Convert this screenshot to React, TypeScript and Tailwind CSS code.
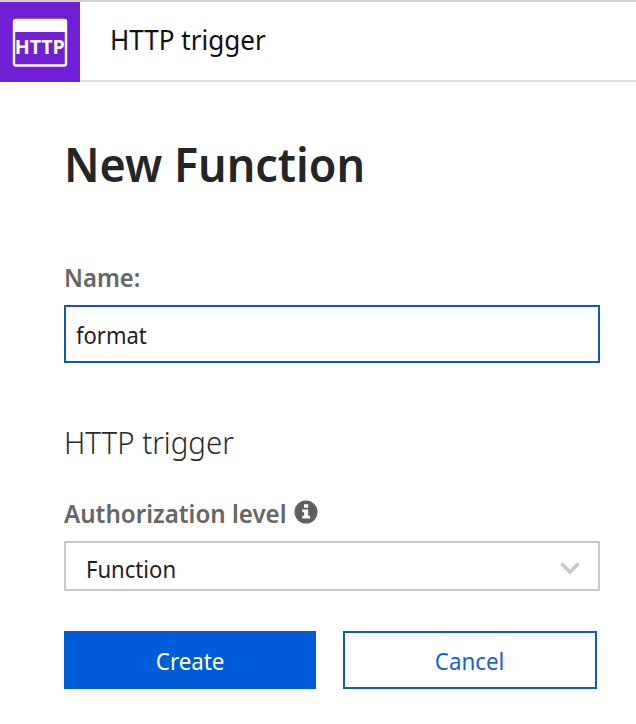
import React from "react";

function HttpIcon() {
  return (
    <div className="flex h-[80px] w-[80px] shrink-0 items-center justify-center bg-[#711fd6]">
      <svg width="80" height="80" viewBox="0 0 80 80">
        <rect x="14" y="18" width="52" height="45.5" rx="2" fill="none" stroke="#fff" strokeWidth="2.4" />
        <path d="M13 30V19a2 2 0 0 1 2-2h50a2 2 0 0 1 2 2v11z" fill="#fff" />
        <text x="14.8" y="52" fill="#fff" fontSize="19" fontWeight="700" fontFamily="Open Sans, sans-serif" textLength="50" lengthAdjust="spacingAndGlyphs">
          HTTP
        </text>
      </svg>
    </div>
  );
}

function InfoIcon() {
  return (
    <svg className="ml-[-1px] mt-[7px] shrink-0" width="24" height="24" viewBox="0 0 24 24">
      <circle cx="12" cy="12" r="11.5" fill="#5f5f5f" />
      <path d="M10 4.3h4.2v3.4H10zM8.3 9.5h5.9v6.2H16v2.8H8.3v-2.8h1.8v-3.5H8.3z" fill="#fff" />
    </svg>
  );
}

export default function App() {
  return (
    <div className="h-[724px] w-[636px] overflow-hidden bg-white font-['Noto_Sans',sans-serif]">
      <header className="flex h-[82px] border-t-2 border-[#d2d2d2]">
        <HttpIcon />
        <div className="flex flex-1 border-b-2 border-[#e1e1e1] pl-[30px] pt-[18px]">
          <span className="origin-left scale-x-[0.965] text-[27px] leading-[40px] text-[#111]">HTTP trigger</span>
        </div>
      </header>
      <main className="flex flex-col pl-[64px] pr-[36px]">
        <h1 className="mt-[52px] h-[60px] origin-left scale-x-[0.955] whitespace-nowrap text-[47px] font-semibold leading-[60px] text-[#252525]">New Function</h1>
        <label className="mt-[63px] h-[40px] origin-left scale-x-[0.955] text-[25px] font-semibold leading-[40px] text-[#666]">Name:</label>
        <div className="mt-[8px] flex h-[58px] border-2 border-[#1259b5] pl-[10px] pt-[8px]">
          <span className="origin-left scale-x-[0.935] text-[23.5px] leading-[40px] text-[#1e1e1e]">format</span>
        </div>
        <h2 className="mt-[59px] h-[40px] origin-left scale-x-[0.95] whitespace-nowrap text-[31px] font-light leading-[40px] text-[#2b2b2b]">HTTP trigger</h2>
        <div className="mt-[31px] flex h-[40px]">
          <span className="origin-left scale-x-[0.965] whitespace-nowrap text-[25px] font-semibold leading-[40px] text-[#666]">Authorization level</span>
          <InfoIcon />
        </div>
        <div className="mt-[8px] flex h-[50px] justify-between border-2 border-[#c8c8c8] pl-[20px] pr-[18px]">
          <span className="mt-[6px] origin-left scale-x-[0.94] text-[23.5px] leading-[40px] text-[#1e1e1e]">Function</span>
          <svg className="mt-[16px]" width="20" height="18" viewBox="0 0 20 18">
            <path d="M1.5 4.5L10 13l8.5-8.5" fill="none" stroke="#c6c6c6" strokeWidth="3.5" />
          </svg>
        </div>
        <div className="mt-[40px] flex gap-[27px]">
          <button className="flex h-[58px] w-[252px] justify-center bg-[#015cda] pt-[10px] text-[23.5px] leading-[40px] text-white">
            <span className="scale-x-[0.95]">Create</span>
          </button>
          <button className="flex h-[58px] w-[254px] justify-center border-2 border-[#1259b5] pt-[8px] text-[23.5px] leading-[40px] text-[#1b5fd0]">
            <span className="scale-x-[0.95]">Cancel</span>
          </button>
        </div>
      </main>
    </div>
  );
}
